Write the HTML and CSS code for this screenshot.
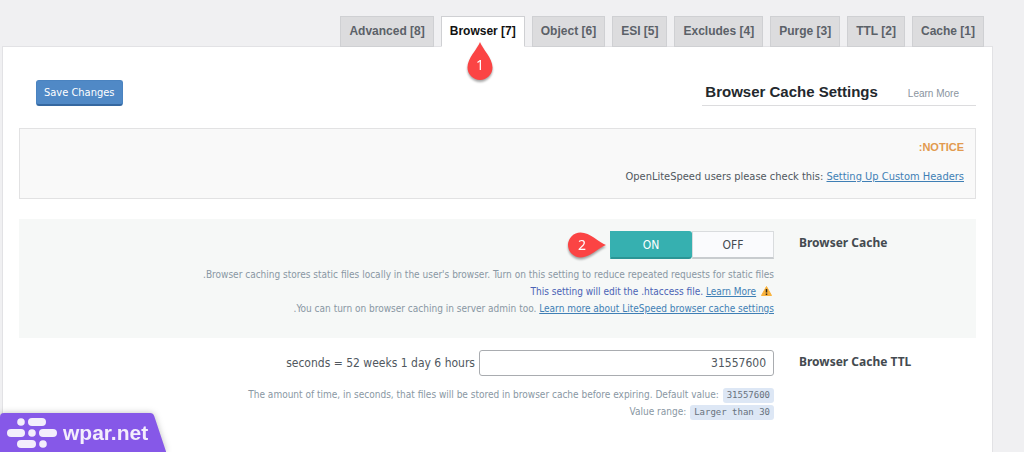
FILE: index.html
```html
<!DOCTYPE html>
<html lang="en">
<head>
<meta charset="utf-8">
<title>Browser Cache Settings</title>
<link rel="stylesheet" href="styles.css">
</head>
<body>
<nav class="tabs">
  <a class="tab" href="#advanced">Advanced [8]</a>
  <a class="tab active" href="#browser">Browser [7]
    <svg class="pin pin-tab" width="28" height="44" viewBox="0 0 28 44"><path d="M14 2C16.500 9 26.500 18 26.500 27.500A12.500 12.500 0 0 1 1.500 27.500C1.500 18 11.500 9 14 2Z" fill="#fb4444"/><text x="14" y="30" text-anchor="middle">1</text></svg>
  </a>
  <a class="tab" href="#object">Object [6]</a>
  <a class="tab" href="#esi">ESI [5]</a>
  <a class="tab" href="#excludes">Excludes [4]</a>
  <a class="tab" href="#purge">Purge [3]</a>
  <a class="tab" href="#ttl">TTL [2]</a>
  <a class="tab" href="#cache">Cache [1]</a>
</nav>
<main class="panel">
  <header class="panel-head">
    <button class="save" type="button">Save Changes</button>
    <div class="title"><h1>Browser Cache Settings</h1><a href="#learn">Learn More</a></div>
  </header>
  <section class="notice">
    <h2>:NOTICE</h2>
    <p>OpenLiteSpeed users please check this: <a href="#headers">Setting Up Custom Headers</a></p>
  </section>
  <section class="row shaded">
    <div class="field">
      <div class="toggle" role="group" aria-labelledby="bc">
        <button class="on" type="button" aria-pressed="true">ON</button><button class="off" type="button" aria-pressed="false">OFF</button>
        <svg class="pin pin-toggle" width="44" height="28" viewBox="0 0 44 28"><path d="M40 14C33 11.500 24 1.500 14.500 1.500A12.500 12.500 0 0 0 14.500 26.500C24 26.500 33 16.500 40 14Z" fill="#fb4444"/><text x="16" y="19" text-anchor="middle">2</text></svg>
      </div>
      <div class="desc">
        <p>.Browser caching stores static files locally in the user's browser. Turn on this setting to reduce repeated requests for static files</p>
        <p class="warn">This setting will edit the .htaccess file. <a href="#more">Learn More</a>
          <svg class="alert" width="11" height="10" viewBox="0 0 11 10"><path d="M5.500.5 10.500 9.500H.5Z" fill="#f9b23c" stroke="#f9b23c" stroke-linejoin="round"/><path d="M5.500 3V6.500M5.500 7.500V9" stroke="#33281a" stroke-width="1.500"/></svg></p>
        <p>.You can turn on browser caching in server admin too. <a href="#server">Learn more about LiteSpeed browser cache settings</a></p>
      </div>
    </div>
    <h3 class="label" id="bc">Browser Cache</h3>
  </section>
  <section class="row">
    <div class="field">
      <div class="entry"><span>seconds = 52 weeks 1 day 6 hours</span><input id="ttl-value" type="text" value="31557600"></div>
      <div class="desc desc-input">
        <p>The amount of time, in seconds, that files will be stored in browser cache before expiring. Default value: <code>31557600</code></p>
        <p>Value range: <code>Larger than 30</code></p>
      </div>
    </div>
    <label class="label" for="ttl-value">Browser Cache TTL</label>
  </section>
</main>
<aside class="brand">
  <svg class="brand-bg" viewBox="0 0 166 39" preserveAspectRatio="none"><path d="M0 39V4Q0 0 4 0H150Q153 0 154 3L166 39Z" fill="#8658e8"/></svg>
  <svg class="logo" width="50" height="30" viewBox="0 0 50 30" fill="#f3eefc"><circle cx="14" cy="4" r="3.800"/><rect x="21" y="0" width="18" height="8" rx="4"/><rect x="0" y="11" width="18" height="8" rx="4"/><circle cx="25" cy="15" r="3.800"/><rect x="32" y="11" width="18" height="8" rx="4"/><rect x="10" y="22" width="19" height="8" rx="4"/><circle cx="36" cy="26" r="3.800"/></svg>
  <span>wpar.net</span>
</aside>
</body>
</html>
```

FILE: styles.css
```css
* { box-sizing: border-box; }
body {
  margin: 0;
  min-height: 100vh;
  display: flex;
  flex-direction: column;
  background: #f0f0f2;
  color: #50575e;
  font-family: "DejaVu Sans Condensed", "DejaVu Sans", sans-serif;
  font-size: 11px;
  overflow: hidden;
}
h1, h2, h3, p { margin: 0; }
a { color: #3f7fb5; }
button, input { font: inherit; }

.tabs {
  display: flex;
  justify-content: flex-end;
  gap: 7px;
  padding: 16px 40px 0 0;
}
.tab {
  position: relative;
  margin-bottom: -1px;
  padding: 0 8px;
  border: 1px solid #cfd0d3;
  background: #dcdcde;
  color: #5b6168;
  font: bold 12px/29px "Liberation Sans", Arial, sans-serif;
  text-decoration: none;
}
.tab.active {
  background: #fff;
  border-bottom-color: #fff;
  color: #111;
}
.pin { position: absolute; filter: drop-shadow(0 2px 1px rgba(0, 0, 0, .35)); }
.pin text { fill: #fff; font: 14px "Noto Sans", sans-serif; }
.pin-tab { top: 23px; left: 24px; z-index: 1; }
.pin-toggle { top: 0; right: 100%; }

.panel {
  flex: 1;
  margin: 0 31px 0 2px;
  padding: 33px 16px 0;
  border: 1px solid #e2e2e5;
  border-width: 1px 1px 0;
  background: #fff;
}
.panel-head {
  display: flex;
  justify-content: space-between;
  align-items: flex-start;
  padding-left: 17px;
}
.save {
  height: 26px;
  padding: 0 7px;
  border: 1px solid #4a83c0;
  border-bottom: 2px solid #3568a0;
  border-radius: 3px;
  background: #5089c6;
  color: #fff;
}
.title {
  display: flex;
  align-items: baseline;
  gap: 30px;
  padding: 3px 17px 2px 3px;
  border-bottom: 1px solid #dcdcde;
}
.title h1 { color: #23282d; font: bold 15px/18px "Liberation Sans", Arial, sans-serif; }
.title a { color: #8a949e; font: 10px/18px "Liberation Sans", Arial, sans-serif; text-decoration: none; }

.notice {
  margin-top: 22px;
  padding: 9px 11px 12px;
  border: 1px solid #e2e2e3;
  background: #f9f9f9;
  text-align: right;
}
.notice h2 { color: #e29a4f; font: bold 11px/18px "Liberation Sans", Arial, sans-serif; }
.notice p { margin-top: 12px; line-height: 18px; }

.row { display: flex; padding: 12px 0; }
.shaded { margin-top: 20px; padding-bottom: 21px; background: #f6f8f7; }
.field { flex: 1; display: flex; flex-direction: column; align-items: flex-end; text-align: right; }
.label {
  width: 202px;
  padding-left: 25px;
  color: #444a50;
  font: bold 12px/24px "Noto Sans", sans-serif;
}
.toggle { position: relative; display: flex; width: 164px; height: 28px; font-size: 12px; }
.toggle button { flex: 1; padding: 0; border: 1px solid #d9dcde; border-bottom: 2px solid #c8cccf; background: #fafbfd; color: #444a50; }
.toggle .on { border-color: #36b0b0; border-bottom-color: #2b9595; border-radius: 0 3px 3px 0; background: #36b0b0; color: #fff; }

.desc { margin-top: 7px; color: #8997a3; font-size: 10px; line-height: 17px; }
.desc-input { margin-top: 10px; }
.warn { color: #4a63b5; }
.alert { margin: 0 2px; vertical-align: -1px; }
.entry { display: flex; align-items: center; gap: 4px; font-size: 12px; }
.entry input {
  width: 295px;
  height: 26px;
  padding: 0 7px;
  border: 1px solid #a9acb0;
  border-radius: 3px;
  background: #fff;
  color: #50575e;
  text-align: right;
}
code {
  display: inline-block;
  margin-left: 1px;
  padding: 0 4px;
  border-radius: 3px;
  background: #dde7f5;
  color: #68727d;
  font: 9px/15px "DejaVu Sans Mono", monospace;
}

.brand {
  position: fixed;
  left: 0;
  bottom: 0;
  display: flex;
  align-items: center;
  gap: 6px;
  height: 39px;
  padding: 0 18px 0 7px;
  filter: drop-shadow(0 0 3px rgba(0, 0, 0, .25));
}
.brand-bg { position: absolute; inset: 0; width: 100%; height: 100%; }
.logo, .brand span { position: relative; }
.brand span { color: #f3eefc; font: bold 21px/36px "Liberation Sans", Arial, sans-serif; }
```
